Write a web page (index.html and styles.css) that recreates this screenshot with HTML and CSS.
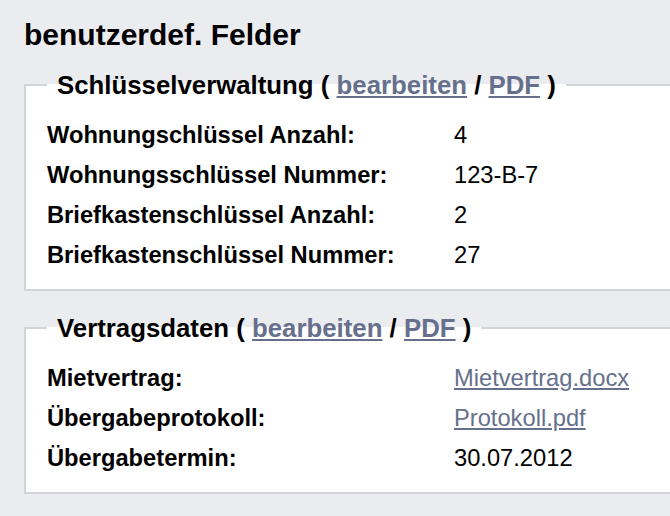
FILE: index.html
```html
<!DOCTYPE html>
<html lang="de">
<head>
    <meta charset="UTF-8">
    <meta name="viewport" content="width=device-width, initial-scale=1.0">
    <title>benutzerdef. Felder</title>
    <link rel="stylesheet" href="styles.css">
</head>
<body>
    <div class="page">
        <h1>benutzerdef. Felder</h1>

        <fieldset class="field-group">
            <legend>Schlüsselverwaltung ( <a href="#">bearbeiten</a> / <a href="#">PDF</a> )</legend>
            <table class="field-table">
                <tr><th>Wohnungschlüssel Anzahl:</th><td>4</td></tr>
                <tr><th>Wohnungsschlüssel Nummer:</th><td>123-B-7</td></tr>
                <tr><th>Briefkastenschlüssel Anzahl:</th><td>2</td></tr>
                <tr><th>Briefkastenschlüssel Nummer:</th><td>27</td></tr>
            </table>
        </fieldset>

        <fieldset class="field-group">
            <legend>Vertragsdaten ( <a href="#">bearbeiten</a> / <a href="#">PDF</a> )</legend>
            <table class="field-table">
                <tr><th>Mietvertrag:</th><td><a href="#">Mietvertrag.docx</a></td></tr>
                <tr><th>Übergabeprotokoll:</th><td><a href="#">Protokoll.pdf</a></td></tr>
                <tr><th>Übergabetermin:</th><td>30.07.2012</td></tr>
            </table>
        </fieldset>
    </div>
</body>
</html>
```

FILE: styles.css
```css
html, body {
    overflow: hidden;
}

body {
    margin: 0;
    background-color: #ebecf0;
    color: #000;
    font-family: "Liberation Sans", Arial, Helvetica, sans-serif;
}

.page {
    padding: 0 0 0 24px;
}

h1 {
    margin: 0;
    padding-top: 19px;
    font-size: 30px;
    line-height: 32px;
    font-weight: bold;
}

a {
    color: #66708c;
}

/* Felder-Gruppe: weisser Kasten mit grauem Rahmen, rechts angeschnitten */
.field-group {
    width: 700px;
    margin: 19px 0 0 0;
    padding: 15px 21px 14px 21px;
    border: 2px solid #d3d4d9;
    background-color: #fff;
}

.field-group + .field-group {
    margin-top: 22px;
}

.field-group legend {
    padding: 0 10px;
    font-size: 25.8px;
    line-height: 30px;
    font-weight: bold;
}

.field-table {
    border-collapse: collapse;
    font-size: 23.7px;
}

.field-table th,
.field-table td {
    padding: 0;
    height: 40px;
    text-align: left;
    white-space: nowrap;
}

.field-table th {
    width: 407px;
    font-weight: bold;
}
```
